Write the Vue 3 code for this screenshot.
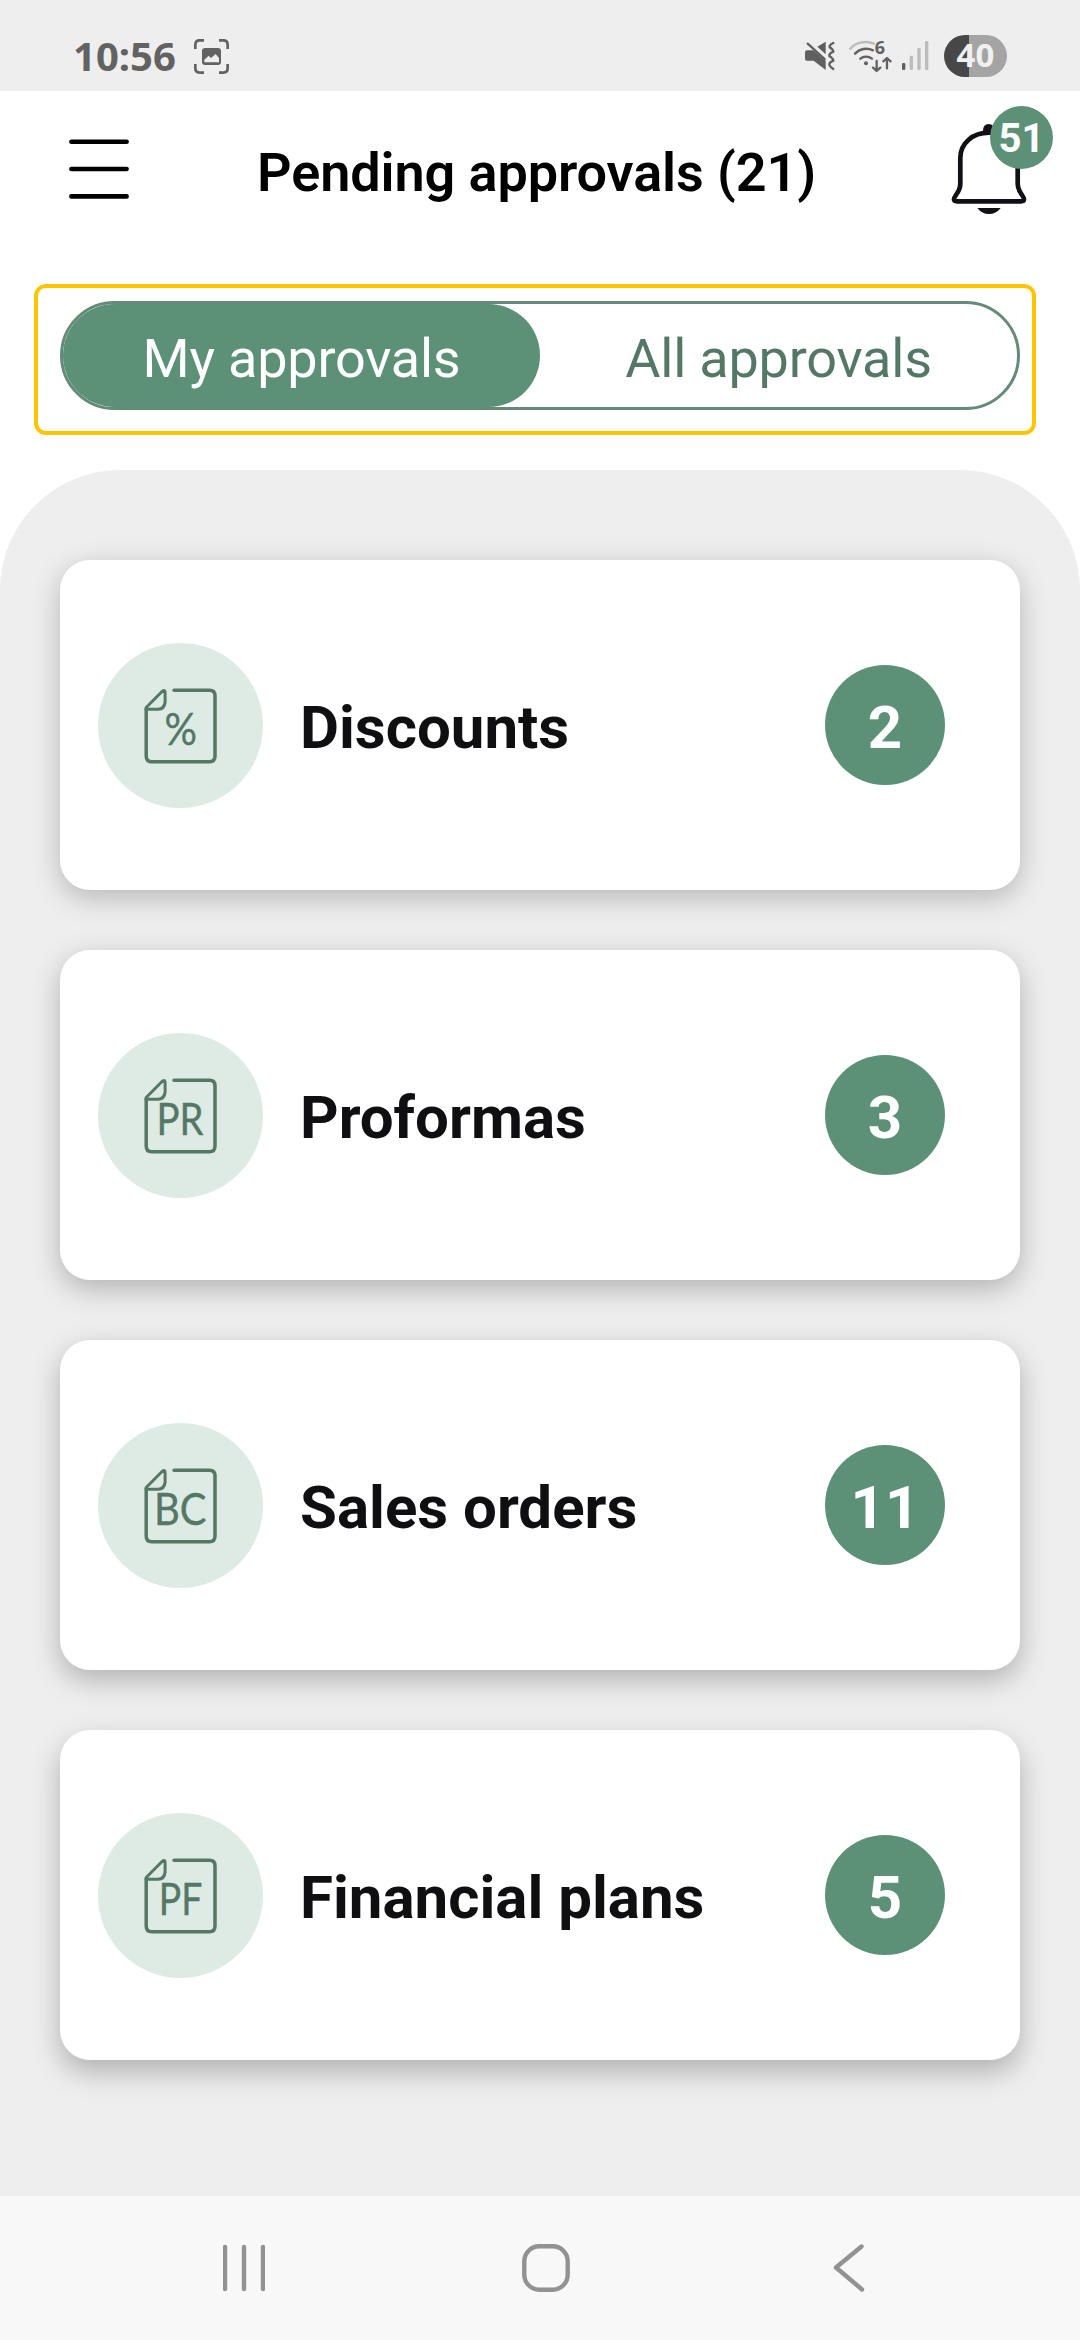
<script setup>
const cards = [
  { title: 'Discounts', count: 2, code: '%', x: 66.5, width: 32.5 },
  { title: 'Proformas', count: 3, code: 'PR', x: 58.5, width: 47 },
  { title: 'Sales orders', count: 11, code: 'BC', x: 56, width: 52.5 },
  { title: 'Financial plans', count: 5, code: 'PF', x: 60.8, width: 43.5 },
]
</script>

<template>
  <div class="screen">
    <div class="status">
      <div class="status-left">
        <span class="clock">10:56</span>
        <svg class="shot" viewBox="582 117 105 105">
          <g fill="none" stroke="#626262" stroke-width="8" stroke-linecap="butt">
            <path d="M586 147V134q0-13 13-13H612M657 121h13q13 0 13 13V147M683 192v13q0 13-13 13H657M612 218H599q-13 0-13-13V192" />
          </g>
          <rect x="606" y="144" width="57" height="51" rx="9" fill="#626262" />
          <path d="M613 187V179L626 167L633 174L647 162L657 174V187Z" fill="#eee" />
        </svg>
      </div>
      <div class="status-right">
        <svg class="mute" viewBox="135 105 90 126">
          <g fill="#5f5f5f">
            <path d="M141 151H160L197 182V210L161 182H141Q135 182 135 176V157Q135 151 141 151Z" />
            <path d="M172 140L197 125V163Z" />
          </g>
          <g fill="none" stroke="#5f5f5f" stroke-width="7" stroke-linecap="round" stroke-linejoin="round">
            <path d="M143 131L194 177" />
            <path d="M220 129Q207 135 209 142Q220 149 220 155Q207 161 208 168Q220 176 220 182Q207 188 208 195Q212 202 220 207" />
          </g>
        </svg>
        <svg class="wifi" viewBox="268 105 130 126">
          <g fill="none" stroke-width="7" stroke-linecap="round" stroke-linejoin="round">
            <path d="M272 146C290 126 320 121 343 131" stroke="#bbb" />
            <path d="M286 161C300 146 322 142 340 151M302 176C312 168 326 168 337 176" stroke="#626262" />
            <path d="M351 183V212M340 203L351 213L362 203M382 205V175M371 184L382 174L393 184" stroke="#626262" />
          </g>
          <circle cx="319" cy="190" r="6" fill="#626262" />
          <text x="345" y="163" class="wifi-gen">6</text>
        </svg>
        <svg class="signal" viewBox="427 105 80 126">
          <rect x="427" y="189" width="10" height="21" rx="4" fill="#5f5f5f" />
          <g fill="#bcbcbc">
            <rect x="450" y="167" width="10" height="43" rx="4" />
            <rect x="473" y="144" width="10" height="66" rx="4" />
            <rect x="496" y="123" width="10" height="87" rx="4" />
          </g>
        </svg>
        <div class="battery"><span>40</span></div>
      </div>
    </div>

    <header class="header">
      <svg class="menu" viewBox="0 0 60 60">
        <path d="M2.4 2.7H57.6M2.4 30H57.6M2.4 57.4H57.6" fill="none" stroke="#000" stroke-width="4.6" stroke-linecap="round" />
      </svg>
      <h1>Pending approvals (21)</h1>
      <div class="bell">
        <svg viewBox="0 0 78 96">
          <path d="M10.3 38V64Q10.3 69 6 75Q1.5 81.3 7 81.3H71Q76.500 81.3 72 75Q67.700 69 67.700 64V38C67.700 23 55 12.700 39 12.700S10.300 23 10.300 38Z" fill="none" stroke="#111014" stroke-width="4.700" />
          <path d="M33 11Q33 4 38.700 4T44.500 11Z" fill="#111014" />
          <path d="M27.300 88.100H50.700Q46 94.100 39 94.100T27.300 88.100Z" fill="#111014" />
        </svg>
        <span class="bell-count">51</span>
      </div>
    </header>

    <div class="focus">
      <div class="toggle">
        <div class="tab active">My approvals</div>
        <div class="tab">All approvals</div>
      </div>
    </div>

    <main class="sheet">
      <section v-for="card in cards" :key="card.code" class="card">
        <svg class="icon" viewBox="0 0 165 165">
          <circle cx="82.5" cy="82.5" r="82.5" fill="#deebe4" />
          <g fill="none" stroke="#547865" stroke-linecap="round" stroke-linejoin="round">
            <path stroke-width="3.5" d="M76 47.300H111.500Q117 47.300 117 53V113Q117 118.800 111.400 118.800H53.800Q48.200 118.800 48.200 113V65.500" />
            <path stroke-width="3" d="M48.200 66.300V64.500L64.800 47.800Q67.200 46.400 67.100 50V59Q66.500 66 60 66.300Z" />
          </g>
          <text :x="card.x" y="102" :textLength="card.width" lengthAdjust="spacingAndGlyphs" class="code">{{ card.code }}</text>
        </svg>
        <span class="title">{{ card.title }}</span>
        <span class="count">{{ card.count }}</span>
      </section>
    </main>

    <nav class="nav">
      <svg class="recents" viewBox="0 0 42 48">
        <path d="M2 3V45M21 3V45M40 3V45" />
      </svg>
      <svg class="home" viewBox="0 0 48 48">
        <rect x="2.300" y="2.300" width="43.400" height="43.400" rx="15" />
      </svg>
      <svg class="back" viewBox="0 0 32 48">
        <path d="M28.500 2.500L3 23.500L29 45.500" />
      </svg>
    </nav>
  </div>
</template>

<style>
body {
  margin: 0;
}
</style>

<style scoped>
.screen {
  width: 1080px;
  height: 2340px;
  display: flex;
  flex-direction: column;
  background: #fff;
  font-family: Roboto, sans-serif;
  overflow: hidden;
}
svg {
  display: block;
  flex: none;
}
.status {
  box-sizing: border-box;
  height: 91px;
  padding: 21px 73px 0 73px;
  display: flex;
  align-items: center;
  justify-content: space-between;
  background: #eee;
}
.status-left,
.status-right {
  display: flex;
  align-items: center;
}
.clock {
  width: 121px;
  font: 700 40px/56px "Noto Sans", sans-serif;
  color: #626262;
}
.shot {
  width: 35px;
  height: 35px;
}
.mute {
  width: 30px;
  height: 42px;
  margin-right: 14.3px;
}
.wifi {
  width: 43.3px;
  height: 42px;
  margin-right: 9.7px;
}
.wifi-gen {
  font: 700 54px "Noto Sans", sans-serif;
  fill: #626262;
}
.signal {
  width: 26.7px;
  height: 42px;
  margin-right: 15px;
}
.battery {
  width: 63px;
  height: 42px;
  border-radius: 21px;
  background: linear-gradient(90deg, #474747 39.5%, #a4a4a4 39.5%);
  text-align: center;
  font: 700 33px/40px "Noto Sans", sans-serif;
  color: #f0f0f0;
}
.header {
  box-sizing: border-box;
  height: 193px;
  padding: 48px 52px 0 69px;
  display: flex;
  justify-content: space-between;
}
.menu {
  width: 60px;
  height: 60px;
}
h1 {
  margin: 2px 6px 0 0;
  font-size: 54px;
  line-height: 64px;
  font-weight: 600;
  letter-spacing: -0.1px;
  color: #000;
}
.bell {
  position: relative;
  width: 78px;
  height: 96px;
  margin-top: -19px;
}
.bell svg {
  width: 78px;
  height: 96px;
}
.bell-count {
  position: absolute;
  left: 40px;
  top: -14px;
  width: 63px;
  height: 63px;
  border-radius: 50%;
  background: #5d9177;
  color: #fff;
  font-size: 40px;
  line-height: 66px;
  font-weight: 700;
  text-align: center;
}
.focus {
  box-sizing: border-box;
  width: 1002px;
  height: 151px;
  margin-left: 34px;
  padding: 13px 12px 0 22px;
  border: 4px solid #fcc500;
  border-radius: 12px;
}
.toggle {
  box-sizing: border-box;
  width: 960px;
  height: 109px;
  display: flex;
  border: 3px solid #658b78;
  border-radius: 55px;
}
.tab {
  flex: 1;
  height: 103px;
  border-radius: 52px;
  text-align: center;
  font-size: 54px;
  letter-spacing: -0.2px;
  line-height: 109px;
  color: #547865;
}
.tab.active {
  background: #5d9177;
  color: #fff;
}
.sheet {
  box-sizing: border-box;
  height: 1726px;
  margin-top: 35px;
  padding: 90px 60px 0;
  display: flex;
  flex-direction: column;
  gap: 60px;
  background: #eee;
  border-radius: 120px 120px 0 0;
}
.card {
  box-sizing: border-box;
  height: 330px;
  padding: 0 75px 0 38px;
  display: flex;
  align-items: center;
  background: #fff;
  border-radius: 30px;
  box-shadow: 0 8px 28px rgba(0, 0, 0, 0.23);
}
.card:nth-child(2) {
  box-shadow: 0 9px 28px rgba(0, 0, 0, 0.25);
}
.card:nth-child(3) {
  box-shadow: 0 10px 28px rgba(0, 0, 0, 0.26);
}
.card:nth-child(4) {
  box-shadow: 0 12px 28px rgba(0, 0, 0, 0.26);
}
.icon {
  width: 165px;
  height: 165px;
}
.code {
  font: 400 45px Lato, sans-serif;
  fill: #547865;
  stroke: #547865;
  stroke-width: 0.4;
  stroke-linejoin: round;
}
.title {
  flex: 1;
  margin-left: 37px;
  padding-top: 5px;
  font-size: 60px;
  line-height: 70px;
  font-weight: 700;
  color: #0f0e11;
}
.count {
  width: 120px;
  height: 120px;
  border-radius: 50%;
  background: #5d9177;
  color: #fff;
  text-align: center;
  font-size: 60px;
  line-height: 125px;
  font-weight: 700;
}
.nav {
  height: 144px;
  display: flex;
  align-items: center;
  background: #f8f8f8;
  fill: none;
  stroke: #929292;
  stroke-width: 4.4;
  stroke-linecap: round;
  stroke-linejoin: round;
}
.recents {
  width: 42px;
  height: 48px;
  margin-left: 223px;
}
.home {
  width: 48px;
  height: 48px;
  margin-left: 257px;
}
.back {
  width: 32px;
  height: 48px;
  margin-left: 263px;
}
</style>
